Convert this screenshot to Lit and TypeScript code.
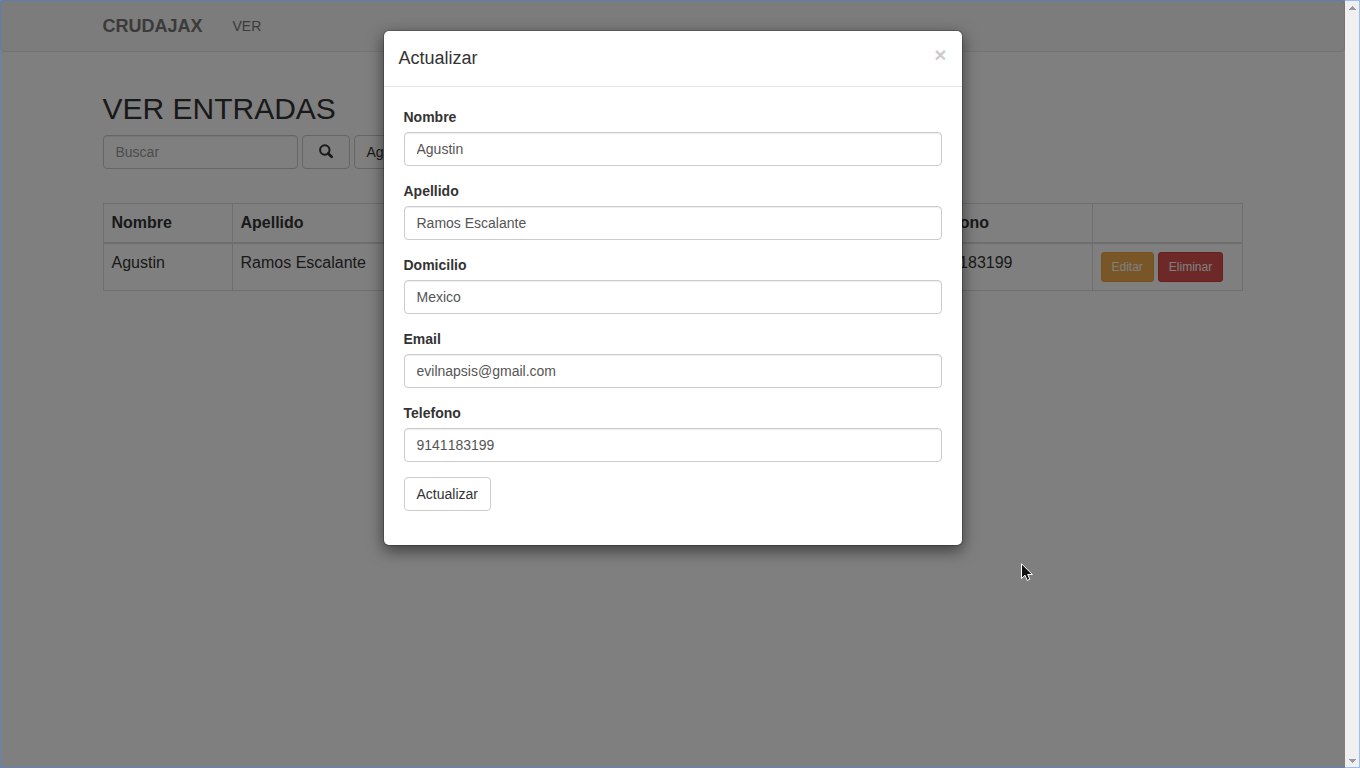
import { LitElement, html, css } from "lit";
import { customElement, state } from "lit/decorators.js";

interface Field {
  id: string;
  label: string;
  value: string;
}

@customElement("app-root")
export class AppRoot extends LitElement {
  static styles = css`
    :host {
      display: block;
      font: 14px/20px "Liberation Sans", Arial, sans-serif;
      color: #333;
    }
    * { box-sizing: border-box; }
    button, input { font: inherit; margin: 0; }
    .window {
      position: relative;
      display: flex;
      height: 100vh;
      background: #fff;
      overflow: hidden;
    }
    .frame {
      position: absolute;
      inset: 0;
      border: 1px solid rgba(72, 136, 245, 0.5);
      pointer-events: none;
    }
    .view { position: relative; flex: 1; min-width: 0; }
    .container { max-width: 1170px; margin: 0 auto; padding: 0 15px; }
    .navbar {
      border: 1px solid #e7e7e7;
      border-radius: 4px;
      background: #f8f8f8;
      margin-bottom: 40px;
    }
    .nav { display: flex; align-items: center; gap: 30px; height: 50px; }
    .nav a { color: #777; text-decoration: none; }
    .nav .brand { font-size: 18px; font-weight: 700; }
    h2, h4 { font-weight: 400; }
    h2 { font-size: 30px; line-height: 33px; margin: 0 0 10px; }
    .tools { display: flex; gap: 4px; margin-bottom: 34px; }
    .control {
      height: 34px;
      padding: 6px 12px;
      border: 1px solid #ccc;
      border-radius: 4px;
      background: #fff;
      color: #555;
      box-shadow: inset 0 1px 1px rgba(0, 0, 0, 0.075);
      width: 100%;
      display: block;
      font-kerning: none;
    }
    .control::placeholder { color: #999; opacity: 1; }
    .search { width: 195px; flex: 0 1 195px; }
    .btn {
      height: 34px;
      padding: 6px 12px;
      border: 1px solid #ccc;
      border-radius: 4px;
      background: #fff;
      color: #333;
      white-space: nowrap;
    }
    .icon-btn { width: 48px; display: flex; align-items: center; justify-content: center; }
    .small { height: 30px; padding: 4px 10px; font-size: 12px; border-radius: 3px; color: #fff; }
    .warning { background: #f0ad4e; border-color: #eea236; }
    .danger { background: #d9534f; border-color: #d43f3a; }
    .actions { display: flex; gap: 4px; }
    table {
      width: 100%;
      border-collapse: collapse;
      table-layout: fixed;
      font-size: 16px;
      line-height: 23px;
      border: 1px solid #ddd;
    }
    th, td { padding: 7px 8px 8px; border: 1px solid #ddd; text-align: left; vertical-align: top; white-space: nowrap; }
    td { padding: 8px; line-height: 21px; font-kerning: none; }
    th { border-bottom-width: 2px; }
    .c1 { width: 129px; }
    .c2 { width: 244px; }
    .c3 { width: 180px; }
    .c5 { width: 177px; }
    .c6 { width: 150px; }
    .backdrop {
      position: absolute;
      inset: 0;
      display: flex;
      justify-content: center;
      align-items: flex-start;
      padding: 30px 10px;
      background: rgba(0, 0, 0, 0.5);
    }
    .modal {
      width: 580px;
      background: #fff;
      background-clip: padding-box;
      border: 1px solid rgba(0, 0, 0, 0.2);
      border-radius: 6px;
      box-shadow: 0 5px 15px rgba(0, 0, 0, 0.5);
    }
    .modal-head {
      display: flex;
      justify-content: space-between;
      align-items: flex-start;
      padding: 14px 15px 15px;
      border-bottom: 1px solid #e5e5e5;
    }
    h4 { margin: 0; font-size: 18px; line-height: 26px; }
    .close {
      padding: 0;
      border: 0;
      background: none;
      font-size: 21px;
      line-height: 20px;
      font-weight: 700;
      color: #000;
      opacity: 0.2;
    }
    form { padding: 20px; }
    .group { margin-bottom: 15px; }
    label { display: block; margin-bottom: 5px; font-weight: 700; }
    .group:last-child { margin-bottom: 14px; }
    .scrollbar {
      width: 15px;
      background: #f0f0f0;
      display: flex;
      flex-direction: column;
      justify-content: space-between;
      align-items: center;
      padding: 6px 0 5px;
    }
    .scrollbar svg { display: block; }
    .pointer { position: absolute; left: 1021px; top: 563px; pointer-events: none; }
  `;

  @state() private open = true;

  private fields: Field[] = [
    { id: "nombre", label: "Nombre", value: "Agustin" },
    { id: "apellido", label: "Apellido", value: "Ramos Escalante" },
    { id: "domicilio", label: "Domicilio", value: "Mexico" },
    { id: "email", label: "Email", value: "evilnapsis@gmail.com" },
    { id: "telefono", label: "Telefono", value: "9141183199" },
  ];

  private close = () => { this.open = false; };
  private edit = () => { this.open = true; };

  render() {
    return html`
      <div class="window">
        <div class="view">
          <nav class="navbar">
            <div class="container nav">
              <a class="brand" href="#">CRUDAJAX</a>
              <a href="#ver">VER</a>
            </div>
          </nav>
          <main class="container">
            <h2>VER ENTRADAS</h2>
            <div class="tools">
              <input class="control search" type="text" placeholder="Buscar" aria-label="Buscar" />
              <button class="btn icon-btn" type="button" aria-label="Buscar">
                <svg width="16" height="16" viewBox="0 0 16 16" aria-hidden="true">
                  <circle cx="6.8" cy="6" r="4.7" fill="none" stroke="#333" stroke-width="2" />
                  <path d="M10.2 9.5 L13.6 12.8" stroke="#333" stroke-width="2.8" stroke-linecap="round" />
                </svg>
              </button>
              <button class="btn" type="button">Agregar</button>
            </div>
            <table>
              <colgroup>
                <col class="c1" /><col class="c2" /><col class="c3" /><col /><col class="c5" /><col class="c6" />
              </colgroup>
              <thead>
                <tr>${this.fields.map((f) => html`<th scope="col">${f.label}</th>`)}<th></th></tr>
              </thead>
              <tbody>
                <tr>
                  ${this.fields.map((f) => html`<td>${f.value}</td>`)}
                  <td>
                    <div class="actions">
                      <button class="btn small warning" type="button" @click=${this.edit}>Editar</button>
                      <button class="btn small danger" type="button">Eliminar</button>
                    </div>
                  </td>
                </tr>
              </tbody>
            </table>
          </main>
          ${this.open
            ? html`<div class="backdrop">
                <div class="modal" role="dialog" aria-modal="true" aria-labelledby="title">
                  <div class="modal-head">
                    <h4 id="title">Actualizar</h4>
                    <button class="close" type="button" aria-label="Cerrar" @click=${this.close}>×</button>
                  </div>
                  <form @submit=${(e: Event) => e.preventDefault()}>
                    ${this.fields.map(
                      (f) => html`<div class="group">
                        <label for=${f.id}>${f.label}</label>
                        <input class="control" id=${f.id} type="text" .value=${f.value} />
                      </div>`
                    )}
                    <div class="group"><button class="btn" type="submit">Actualizar</button></div>
                  </form>
                </div>
              </div>`
            : null}
        </div>
        <div class="scrollbar" aria-hidden="true">
          <svg width="7" height="4" viewBox="0 0 7 4" shape-rendering="crispEdges"><path d="M3 0h1v1h1v1h1v1h1v1H0V3h1V2h1V1h1z" fill="#999" /></svg>
          <svg width="7" height="4" viewBox="0 0 7 4" shape-rendering="crispEdges"><path d="M0 0h7v1H6v1H5v1H4v1H3V3H2V2H1V1H0z" fill="#999" /></svg>
        </div>
        <svg class="pointer" width="14" height="20" viewBox="0 0 14 20" aria-hidden="true">
          <path d="M.5 .8V15.5L4 12.2L6.2 17.4L8.8 16.3L6.7 11.5H11.4Z" fill="#111" stroke="#fff" stroke-width="1" />
        </svg>
        <div class="frame"></div>
      </div>
    `;
  }
}
